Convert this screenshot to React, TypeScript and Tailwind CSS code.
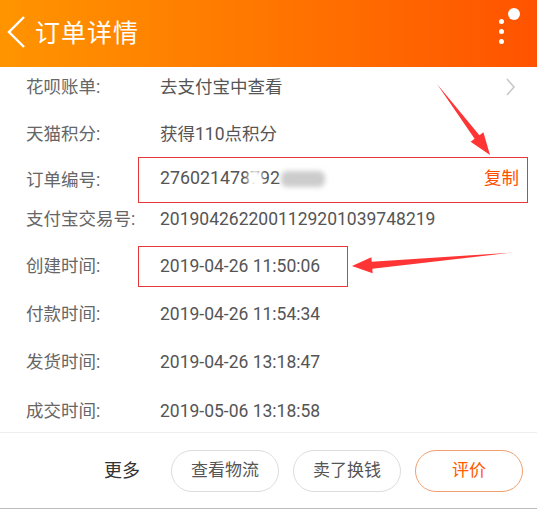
type Row = {
    label: string;
    value: string;
    h: string;
};

const font = { fontFamily: "Roboto, 'Noto Sans CJK SC', sans-serif" };

const times: Row[] = [
    { label: "付款时间:", value: "2019-04-26 11:54:34", h: "h-[48px]" },
    { label: "发货时间:", value: "2019-04-26 13:18:47", h: "h-[49px]" },
    { label: "成交时间:", value: "2019-05-06 13:18:58", h: "h-[45px] pt-[3px]" },
];

const Label = ({ text }: { text: string }) => (
    <span className="w-[138px] shrink-0 whitespace-nowrap pl-[26px] text-[17.5px] text-[#666]">{text}</span>
);

const Header = () => (
    <div className="flex h-[67px] items-center bg-gradient-to-r from-[#ff9400] to-[#ff5200] text-white">
        <svg width="35" height="67" viewBox="0 0 35 67" className="shrink-0">
            <polyline points="24,17 9,32 24,47" fill="none" stroke="white" strokeWidth="2.4" />
        </svg>
        <h1 className="text-[25px] leading-none tracking-[1px]">订单详情</h1>
        <div className="ml-auto mr-[17px] h-[67px] w-[20px] relative">
            <span className="absolute left-[8px] top-[8px] h-[12px] w-[12px] rounded-full bg-white" />
            <span className="absolute left-[-1px] top-[19px] h-[5px] w-[5px] rounded-full bg-white" />
            <span className="absolute left-[-1px] top-[29px] h-[5px] w-[5px] rounded-full bg-white" />
            <span className="absolute left-[-1px] top-[39px] h-[5px] w-[5px] rounded-full bg-white" />
        </div>
    </div>
);

const Arrows = () => (
    <svg width="537" height="509" viewBox="0 0 537 509" className="absolute left-0 top-0 pointer-events-none">
        <polygon
            points="437,84 479.4,135.2 483.4,132.2 490,155 470.6,141.8 474.6,138.8"
            fill="#ff3535"
        />
        <polygon
            points="513,252.5 371.7,261.8 371.4,257.3 352,266 372.6,273.3 372.3,268.8"
            fill="#ff3535"
        />
    </svg>
);

export default function App() {
    return (
        <div className="relative h-[509px] w-[537px] overflow-hidden bg-white" style={font}>
            <Header />

            <div className="flex h-[44px] items-center pb-[4px]">
                <Label text="花呗账单:" />
                <span className="pl-[22px] text-[17.5px] text-[#555]">去支付宝中查看</span>
                <svg width="10" height="18" viewBox="0 0 10 18" className="ml-auto mr-[21px]">
                    <polyline points="1,1 8,9 1,17" fill="none" stroke="#c8c8c8" strokeWidth="1.6" />
                </svg>
            </div>

            <div className="flex h-[46px] items-center">
                <Label text="天猫积分:" />
                <span className="pl-[22px] text-[17.5px] text-[#555]">获得110点积分</span>
            </div>

            <div className="flex h-[46px] items-center">
                <Label text="订单编号:" />
                <div className="mr-[9px] flex h-[46px] flex-1 items-center border border-[#e53935] pb-[3px] pl-[21px] pr-[8px]">
                    <span className="relative whitespace-nowrap text-[17.8px] text-[#555]">
                        2760214787
                        <span>92</span>
                        <span className="ml-[1px] inline-block h-[16px] w-[44px] rounded-[6px] bg-[#cccccc] align-middle blur-[2.5px]" />
                        <span className="absolute left-[88px] top-[4px] h-[18px] w-[14px] rounded-full bg-white blur-[2.5px]" />
                    </span>
                    <span className="ml-auto text-[17.5px] text-[#ff5000]">复制</span>
                </div>
            </div>

            <div className="flex h-[39px] items-center pb-[6px]">
                <Label text="支付宝交易号:" />
                <span className="pl-[22px] text-[17.5px] text-[#555]">2019042622001129201039748219</span>
            </div>

            <div className="flex h-[48px] items-center">
                <Label text="创建时间:" />
                <div className="flex h-[41px] w-[210px] items-center border border-[#e53935] pl-[21px]">
                    <span className="text-[17.5px] text-[#555]">2019-04-26 11:50:06</span>
                </div>
            </div>

            {times.map((row, i) => (
                <div key={i} className={`flex items-center ${row.h}`}>
                    <Label text={row.label} />
                    <span className="pl-[22px] text-[17.5px] text-[#555]">{row.value}</span>
                </div>
            ))}

            <div className="h-px bg-[#eeeeee]" />

            <div className="flex h-[75px] items-center justify-end gap-[14px] pr-[14px]">
                <span className="mr-[17px] text-[18px] text-[#333]">更多</span>
                <button className="h-[42px] w-[108px] rounded-full border border-[#dddddd] text-[17px] text-[#555]">查看物流</button>
                <button className="h-[42px] w-[108px] rounded-full border border-[#dddddd] text-[17px] text-[#555]">卖了换钱</button>
                <button className="h-[42px] w-[108px] rounded-full border border-[#f0a070] text-[17px] text-[#ff5a00]">评价</button>
            </div>

            <div className="h-px bg-[#bbbbbb]" />

            <Arrows />
        </div>
    );
}
